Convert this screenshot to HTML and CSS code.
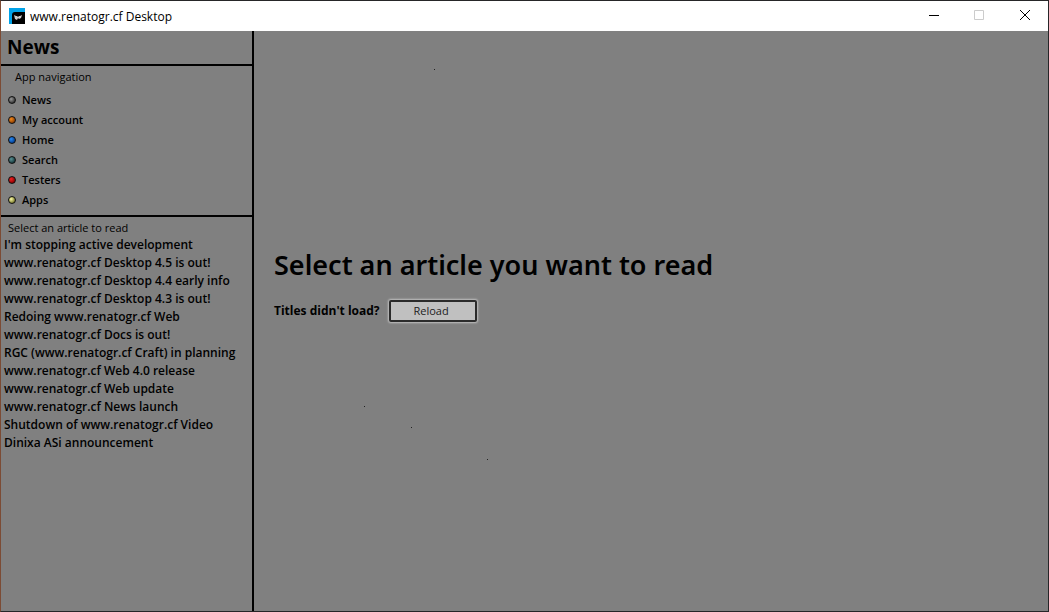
FILE: index.html
```html
<!DOCTYPE html>
<html lang="en">
<head>
<meta charset="utf-8">
<title>www.renatogr.cf Desktop</title>
<link rel="stylesheet" href="styles.css">
</head>
<body>
<div class="window">
  <header class="titlebar">
    <svg class="app-icon" viewBox="0 0 16 16" aria-hidden="true">
      <path fill="#00a2e8" d="M0 0h16v16H0z"/>
      <path fill="#000" d="M3 16V7q0-3 3-3h10v12z"/>
      <path fill="#ccc" d="M5 7l2 1h1l1 1 1-1h1l2-1-1 3-2 1-1-1-1 2-2-1z"/>
    </svg>
    <span class="caption">www.renatogr.cf Desktop</span>
    <div class="controls">
      <button class="control" aria-label="Minimize"><svg viewBox="0 0 10 10"><path d="M1 4.500h10"/></svg></button>
      <button class="control" aria-label="Maximize" disabled><svg viewBox="0 0 10 10"><path d="M.5-.5h9v9h-9z"/></svg></button>
      <button class="control" aria-label="Close"><svg viewBox="0 0 10 10"><path d="M0-1l10 10M10-1L0 9"/></svg></button>
    </div>
  </header>
  <div class="body">
    <aside class="sidebar">
      <h1 class="section-title">News</h1>
      <nav class="nav">
        <h2 class="label">App navigation</h2>
        <a class="nav-link" href="#news"><i class="dot dot-gray"></i>News</a>
        <a class="nav-link" href="#account"><i class="dot dot-orange"></i>My account</a>
        <a class="nav-link" href="#home"><i class="dot dot-blue"></i>Home</a>
        <a class="nav-link" href="#search"><i class="dot dot-teal"></i>Search</a>
        <a class="nav-link" href="#testers"><i class="dot dot-red"></i>Testers</a>
        <a class="nav-link" href="#apps"><i class="dot dot-yellow"></i>Apps</a>
      </nav>
      <section class="articles">
        <h2 class="label">Select an article to read</h2>
        <a class="article" href="#a1">I'm stopping active development</a>
        <a class="article" href="#a2">www.renatogr.cf Desktop 4.5 is out!</a>
        <a class="article" href="#a3">www.renatogr.cf Desktop 4.4 early info</a>
        <a class="article" href="#a4">www.renatogr.cf Desktop 4.3 is out!</a>
        <a class="article" href="#a5">Redoing www.renatogr.cf Web</a>
        <a class="article" href="#a6">www.renatogr.cf Docs is out!</a>
        <a class="article" href="#a7">RGC (www.renatogr.cf Craft) in planning</a>
        <a class="article" href="#a8">www.renatogr.cf Web 4.0 release</a>
        <a class="article" href="#a9">www.renatogr.cf Web update</a>
        <a class="article" href="#a10">www.renatogr.cf News launch</a>
        <a class="article" href="#a11">Shutdown of www.renatogr.cf Video</a>
        <a class="article" href="#a12">Dinixa ASi announcement</a>
      </section>
    </aside>
    <main class="content">
      <svg class="specks" aria-hidden="true"><path fill="#222" d="M180 38h1v1h-1zM110 375h1v1h-1zM157 396h1v1h-1zM233 428h1v1h-1z"/></svg>
      <h2 class="prompt">Select an article you want to read</h2>
      <div class="reload-row">
        <span class="question">Titles didn't load?</span>
        <button class="reload">Reload</button>
      </div>
    </main>
  </div>
</div>
</body>
</html>
```
FILE: styles.css
```css
* { box-sizing: border-box; }
body {
  margin: 0;
  font-family: "Open Sans", "Noto Sans", sans-serif;
  font-size: 12px;
  color: #000;
  background: #808080;
}
h1, h2 { margin: 0; }
a { color: inherit; text-decoration: none; }
.window {
  display: flex;
  flex-direction: column;
  min-height: 100vh;
  border: 1px solid #262628;
  border-left-color: #7c4b34;
}
.titlebar {
  display: flex;
  align-items: center;
  height: 30px;
  padding-left: 8px;
  background: #fff;
}
.app-icon { width: 16px; height: 16px; margin-right: 5px; }
.controls { display: flex; height: 100%; margin-left: auto; }
.control {
  display: flex;
  align-items: center;
  justify-content: center;
  width: 46px;
  padding: 0;
  border: 0;
  background: none;
}
.control svg { width: 10px; height: 10px; fill: none; stroke: #000; overflow: visible; }
.control:disabled svg { stroke: #ccc; }
.body { display: flex; flex: 1; background: #808080; }
.sidebar { width: 253px; border-right: 2px solid #000; }
.section-title {
  height: 35px;
  padding-left: 6px;
  border-bottom: 2px solid #000;
  font-size: 19px;
  line-height: 32px;
  font-weight: 700;
}
.label { padding-left: 7px; font-size: 11px; line-height: 16px; font-weight: 400; }
.nav { padding: 3px 0 5px 7px; border-bottom: 2px solid #000; }
.nav .label { margin-bottom: 5px; }
.nav-link {
  display: flex;
  align-items: center;
  gap: 6px;
  font-size: 11px;
  line-height: 20px;
  font-weight: 600;
}
.dot { width: 8px; height: 8px; border: 1px solid #111; border-radius: 50%; }
.dot-gray { background: radial-gradient(circle at 35% 35%, #999, #333 75%); }
.dot-orange { background: radial-gradient(circle at 35% 35%, #f58a1c, #8a3c00 75%); }
.dot-blue { background: radial-gradient(circle at 35% 35%, #2a8cf5, #003c90 75%); }
.dot-teal { background: radial-gradient(circle at 35% 35%, #5a9093, #163a3d 75%); }
.dot-red { background: radial-gradient(circle at 35% 35%, #f52020, #880000 75%); }
.dot-yellow { background: radial-gradient(circle at 35% 35%, #ffffa8, #78782c 75%); }
.articles { padding-top: 3px; }
.article { display: block; padding-left: 3px; line-height: 18px; font-weight: 600; white-space: nowrap; }
.content {
  position: relative;
  flex: 1;
  display: flex;
  flex-direction: column;
  justify-content: center;
  padding: 0 20px 75px;
}
.specks { position: absolute; inset: 0; width: 100%; height: 100%; }
.prompt { font-family: "Noto Sans", "Open Sans", sans-serif; font-size: 27px; line-height: 38px; font-weight: 600; }
.reload-row { display: flex; align-items: center; gap: 9px; margin-top: 16px; position: relative; }
.question { font-weight: 700; }
.reload {
  width: 88px;
  height: 22px;
  padding: 0 3px 0 0;
  border: 2px solid #2b2b2b;
  border-radius: 2px;
  background: #c0c0c0;
  box-shadow: 0 0 2px 1px #c0c0c0;
  font-family: inherit;
  font-size: 11px;
  color: #222;
}
```
